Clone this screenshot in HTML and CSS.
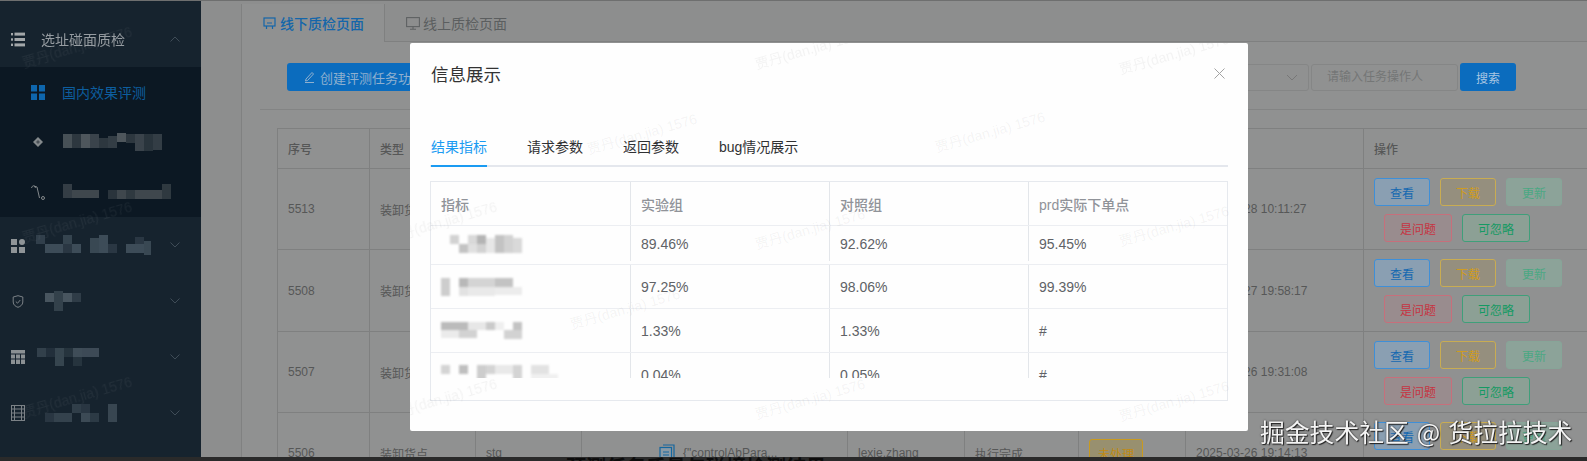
FILE: index.html
```html
<!DOCTYPE html>
<html lang="zh-CN">
<head>
<meta charset="utf-8">
<title>选址碰面质检</title>
<link rel="stylesheet" href="styles.css">
</head>
<body>
<div class="page">
  <div class="app">
    <aside class="sidebar">
      <div class="menu-row">
        <svg class="menu-icon" width="14" height="15" viewBox="0 0 14 15"><g fill="#a3a7a9"><rect x="0" y="1" width="2" height="2.4"/><rect x="0" y="6.3" width="2" height="2.4"/><rect x="0" y="11.6" width="2" height="2.4"/><rect x="3.5" y="0.6" width="10.5" height="3"/><rect x="3.5" y="6" width="10.5" height="3"/><rect x="3.5" y="11.4" width="10.5" height="3"/></g></svg>
        <span class="menu-title">选址碰面质检</span>
        <svg class="chevron" width="10" height="6" viewBox="0 0 10 6"><path d="M0.5 5.5 5 1l4.5 4.5" fill="none" stroke="#3f4c57" stroke-width="1"/></svg>
      </div>
      <div class="submenu">
        <div class="sub-row">
          <svg class="sub-icon" width="14" height="15" viewBox="0 0 14 15"><g fill="#0e66ad"><rect width="6" height="6.5"/><rect x="8" width="6" height="6.5"/><rect y="8.5" width="6" height="6.5"/><rect x="8" y="8.5" width="6" height="6.5"/></g></svg>
          <span class="sub-active">国内效果评测</span>
        </div>
        <div class="sub-row">
          <svg class="sub-icon" width="14" height="14" viewBox="0 0 14 14"><path d="M7 2l5 5-5 5-5-5z" fill="#84898c"/><path d="M7 5l2 2-2 2-2-2z" fill="#4a5157"/></svg>
          <svg class="mosaic" width="100" height="18" viewBox="0 0 100 18"><g fill="#4e565c"><rect y="1" width="9" height="14" opacity=".9"/><rect x="9" y="1" width="9" height="14" opacity=".5"/><rect x="18" y="1" width="9" height="14"/><rect x="27" y="1" width="9" height="14" opacity=".7"/><rect x="36" y="5" width="9" height="10" opacity=".5"/><rect x="45" y="3" width="9" height="12" opacity=".6"/><rect x="54" width="9" height="9" /><rect x="63" y="1" width="9" height="9" opacity=".5"/><rect x="72" y="1" width="9" height="17" opacity=".7"/><rect x="81" y="1" width="9" height="17" opacity=".45"/><rect x="90" y="1" width="9" height="16" opacity=".6"/></g></svg>
        </div>
        <div class="sub-row">
          <svg class="sub-icon" width="14" height="16" viewBox="0 0 14 16"><path d="M0.5 4c1-3 3-3 4 0M3 2l3 1M6 3l2.500 11" fill="none" stroke="#83888b" stroke-width="1"/><circle cx="12" cy="14" r="1.500" fill="none" stroke="#83888b"/></svg>
          <svg class="mosaic" width="108" height="16" viewBox="0 0 108 16"><g fill="#3f474d"><rect width="9" height="14" opacity=".8"/><rect x="9" y="6" width="27" height="8"/><rect x="45" y="6" width="9" height="9" opacity=".6"/><rect x="54" y="6" width="9" height="9"/><rect x="63" y="6" width="9" height="9" opacity=".7"/><rect x="72" y="6" width="27" height="9"/><rect x="99" y="0" width="9" height="15" opacity=".7"/></g></svg>
        </div>
      </div>
      <div class="menu-row">
        <svg class="menu-icon" width="14" height="15" viewBox="0 0 14 15"><g fill="#8f9497"><rect y="1" width="6" height="6"/><circle cx="11" cy="4" r="3"/><rect y="9" width="6" height="6"/><rect x="8" y="9" width="6" height="6"/></g></svg>
        <svg class="mosaic mosaic-a" width="116" height="20" viewBox="0 0 116 20"><g fill="#3d4c58"><rect y="0" width="9" height="9" opacity=".7"/><rect x="9" y="9" width="18" height="9"/><rect x="27" y="9" width="9" height="9" opacity=".5"/><rect x="27" y="0" width="9" height="9" opacity=".8"/><rect x="36" y="9" width="9" height="9" /><rect x="54" y="3" width="9" height="15" opacity=".9"/><rect x="63" y="0" width="9" height="18"/><rect x="72" y="9" width="9" height="9" opacity=".5"/><rect x="90" y="9" width="18" height="9"/><rect x="99" y="2" width="9" height="7" opacity=".5"/><rect x="108" y="6" width="7" height="14" opacity=".9"/></g></svg>
        <svg class="chevron" width="10" height="6" viewBox="0 0 10 6"><path d="M0.5 0.500 5 5l4.500-4.500" fill="none" stroke="#3f4c57" stroke-width="1"/></svg>
      </div>
      <div class="menu-row">
        <svg class="menu-icon" width="14" height="13" viewBox="0 0 14 13"><path d="M7 .7 11.800 2v5c0 3-2.500 4.500-4.800 5.300C4.700 11.500 2.200 10 2.200 7V2z" fill="none" stroke="#7b8186" stroke-width="1"/><path d="M4.800 6.500 6.500 8.200 9.300 5" fill="none" stroke="#7b8186" stroke-width="1"/></svg>
        <svg class="mosaic mosaic-b" width="36" height="20" viewBox="0 0 36 20"><g fill="#48555f"><rect y="2" width="9" height="9"/><rect x="9" y="0" width="9" height="20" opacity=".6"/><rect x="18" y="2" width="9" height="9"/><rect x="27" y="2" width="9" height="9" opacity=".5"/></g></svg>
        <svg class="chevron" width="10" height="6" viewBox="0 0 10 6"><path d="M0.5 0.500 5 5l4.500-4.500" fill="none" stroke="#3f4c57" stroke-width="1"/></svg>
      </div>
      <div class="menu-row">
        <svg class="menu-icon" width="14" height="14" viewBox="0 0 14 14"><g fill="#8b9093"><rect width="14" height="3.500"/><rect y="4.500" width="4" height="4"/><rect x="5" y="4.500" width="4" height="4"/><rect x="10" y="4.500" width="4" height="4"/><rect y="9.500" width="4" height="4.500"/><rect x="5" y="9.500" width="4" height="4.500"/><rect x="10" y="9.500" width="4" height="4.500"/></g></svg>
        <svg class="mosaic mosaic-c" width="62" height="18" viewBox="0 0 62 18"><g fill="#3f4d58"><rect y="0" width="9" height="9" opacity=".7"/><rect x="9" y="0" width="9" height="9" opacity=".3"/><rect x="18" y="0" width="9" height="18" opacity=".8"/><rect x="27" y="0" width="9" height="9" opacity=".4"/><rect x="36" y="0" width="9" height="9"/><rect x="36" y="9" width="9" height="9" opacity=".4"/><rect x="45" y="0" width="17" height="9" opacity=".95"/></g></svg>
        <svg class="chevron" width="10" height="6" viewBox="0 0 10 6"><path d="M0.5 0.500 5 5l4.500-4.500" fill="none" stroke="#3f4c57" stroke-width="1"/></svg>
      </div>
      <div class="menu-row">
        <svg class="menu-icon" width="14" height="16" viewBox="0 0 14 16"><g fill="none" stroke="#7b8186" stroke-width="1"><rect x=".5" y=".5" width="13" height="15"/><path d="M3.500 .5v15M10.500 .5v15M.5 4h13M.5 8h13M.5 12h13"/></g></svg>
        <svg class="mosaic mosaic-d" width="72" height="18" viewBox="0 0 72 18"><g fill="#3c4a55"><rect y="9" width="9" height="9" opacity=".5"/><rect x="9" y="9" width="18" height="9" opacity=".8"/><rect x="27" y="0" width="9" height="9" opacity=".7"/><rect x="36" y="0" width="9" height="9" opacity=".5"/><rect x="36" y="9" width="9" height="9"/><rect x="45" y="9" width="9" height="9" opacity=".6"/><rect x="63" y="0" width="9" height="18" opacity=".9"/></g></svg>
        <svg class="chevron" width="10" height="6" viewBox="0 0 10 6"><path d="M0.5 0.500 5 5l4.500-4.500" fill="none" stroke="#3f4c57" stroke-width="1"/></svg>
      </div>
    </aside>

    <main class="main">
      <div class="card">
        <div class="tabs">
          <div class="tab tab-active">
            <svg width="13" height="13" viewBox="0 0 13 13"><g fill="none" stroke="#1466aa" stroke-width="1.200"><rect x="1" y="1" width="11" height="8"/><path d="M3.500 9v3M9.500 9v3M4 6h5"/></g></svg>
            <span>线下质检页面</span>
          </div>
          <div class="tab">
            <svg width="14" height="13" viewBox="0 0 14 13"><g fill="none" stroke="#5f6263" stroke-width="1.100"><rect x=".6" y=".6" width="12.800" height="9"/><path d="M7 9.600v2.400M4 12.300h6"/></g></svg>
            <span>线上质检页面</span>
          </div>
        </div>
        <div class="toolbar">
          <button class="btn-primary btn-create">
            <svg width="11" height="12" viewBox="0 0 11 12"><path d="M2 8 8 1.500l1.500 1.500L3.500 9.500 1.500 10zM1 11.500h9" fill="none" stroke="#8fb0cf" stroke-width="1"/></svg>
            <span>创建评测任务功能</span>
          </button>
          <div class="filters">
            <div class="select"><svg width="12" height="7" viewBox="0 0 12 7"><path d="M1 1l5 5 5-5" fill="none" stroke="#777" stroke-width="1"/></svg></div>
            <div class="input">请输入任务操作人</div>
            <button class="btn-primary btn-search">搜索</button>
          </div>
        </div>
        <div class="divider"></div>
        <table class="grid">
          <colgroup>
            <col class="c-id"><col class="c-type"><col class="c-env"><col class="c-param"><col class="c-user"><col class="c-state"><col class="c-result"><col class="c-time"><col class="c-op">
          </colgroup>
          <thead>
            <tr><th>序号</th><th>类型</th><th></th><th></th><th></th><th></th><th></th><th></th><th>操作</th></tr>
          </thead>
          <tbody>
            <tr>
              <td>5513</td><td>装卸货点</td><td>stg</td><td></td><td></td><td></td><td></td><td>2025-03-28 10:11:27</td>
              <td class="ops"><div class="op-line"><span class="b b-view">查看</span><span class="b b-down">下载</span><span class="b b-upd">更新</span></div><div class="op-line op-line2"><span class="b b-wide b-bug">是问题</span><span class="b b-wide b-skip">可忽略</span></div></td>
            </tr>
            <tr class="row-tall">
              <td>5508</td><td>装卸货点</td><td>stg</td><td></td><td></td><td></td><td></td><td>2025-03-27 19:58:17</td>
              <td class="ops"><div class="op-line"><span class="b b-view">查看</span><span class="b b-down">下载</span><span class="b b-upd">更新</span></div><div class="op-line op-line2"><span class="b b-wide b-bug">是问题</span><span class="b b-wide b-skip">可忽略</span></div></td>
            </tr>
            <tr>
              <td>5507</td><td>装卸货点</td><td>stg</td><td></td><td></td><td></td><td></td><td>2025-03-26 19:31:08</td>
              <td class="ops"><div class="op-line"><span class="b b-view">查看</span><span class="b b-down">下载</span><span class="b b-upd">更新</span></div><div class="op-line op-line2"><span class="b b-wide b-bug">是问题</span><span class="b b-wide b-skip">可忽略</span></div></td>
            </tr>
            <tr>
              <td>5506</td><td>装卸货点</td><td>stg</td>
              <td class="param"><span class="param-in"><svg width="16" height="18" viewBox="0 0 16 18"><g fill="none" stroke="#14679f" stroke-width="1.200"><path d="M4 1h11v13"/><rect x="1" y="3.500" width="11.500" height="14" fill="#8a9aa6"/><path d="M4 8h6M4 11h6M4 14h6"/></g></svg><span>{"controlAbPara...</span></span></td>
              <td>lexie.zhang</td><td>执行完成</td><td><span class="badge">未处理</span></td><td>2025-03-26 19:14:13</td>
              <td class="ops"><div class="op-line"><span class="b b-view">查看</span><span class="b b-down">下载</span><span class="b b-upd">更新</span></div></td>
            </tr>
          </tbody>
        </table>
      </div>
    </main>
  </div>
  <div class="article-strip">1.1.1 预测任务质量与碰撞检测结果</div>

  <span class="wm wm-dark wm-s1">贾丹(dan.jia) 1576</span>
  <span class="wm wm-dark wm-s2">贾丹(dan.jia) 1576</span>
  <span class="wm wm-dark wm-s3">贾丹(dan.jia) 1576</span>

  <section class="modal">
    <header class="modal-head">
      <h2 class="modal-title">信息展示</h2>
      <svg class="modal-close" width="11" height="11" viewBox="0 0 11 11"><path d="M.5.500l10 10M10.500.500l-10 10" stroke="#a3a3a3" stroke-width="1" fill="none"/></svg>
    </header>
    <nav class="mtabs">
      <span class="mtab mtab-active">结果指标</span>
      <span class="mtab">请求参数</span>
      <span class="mtab">返回参数</span>
      <span class="mtab">bug情况展示</span>
    </nav>
    <div class="mtable">
      <div class="mrow mrow-head"><div class="mc">指标</div><div class="mc">实验组</div><div class="mc">对照组</div><div class="mc">prd实际下单点</div></div>
      <div class="mbody">
        <div class="mrow mrow-first">
          <div class="mc"><svg class="pix pix1" width="72" height="18" viewBox="0 0 72 18"><g fill="#b4b4b4"><rect width="9" height="9" opacity=".6"/><rect x="9" y="9" width="9" height="9" opacity=".8"/><rect x="18" width="9" height="9" opacity=".5"/><rect x="18" y="9" width="9" height="9" opacity=".4"/><rect x="27" width="9" height="9"/><rect x="27" y="9" width="9" height="9" opacity=".6"/><rect x="36" y="3" width="9" height="15" opacity=".3"/><rect x="45" width="9" height="18" opacity=".8"/><rect x="54" width="9" height="18" opacity=".6"/><rect x="63" y="3" width="9" height="15" opacity=".5"/></g></svg></div>
          <div class="mc">89.46%</div><div class="mc">92.62%</div><div class="mc">95.45%</div>
        </div>
        <div class="mrow">
          <div class="mc"><svg class="pix" width="90" height="18" viewBox="0 0 90 18"><g fill="#b8b8b8"><rect width="9" height="18" opacity=".7"/><rect x="18" width="9" height="9"/><rect x="18" y="9" width="9" height="9" opacity=".4"/><rect x="27" width="27" height="9" opacity=".6"/><rect x="27" y="9" width="27" height="9" opacity=".3"/><rect x="54" width="18" height="9" opacity=".85"/><rect x="54" y="9" width="27" height="8" opacity=".25"/></g></svg></div>
          <div class="mc">97.25%</div><div class="mc">98.06%</div><div class="mc">99.39%</div>
        </div>
        <div class="mrow">
          <div class="mc"><svg class="pix" width="81" height="17" viewBox="0 0 81 17"><g fill="#b4b4b4"><rect width="27" height="8" opacity=".9"/><rect y="8" width="18" height="8" opacity=".25"/><rect x="18" y="8" width="18" height="8" opacity=".6"/><rect x="27" width="18" height="8" opacity=".3"/><rect x="45" width="9" height="8" opacity=".7"/><rect x="54" width="9" height="8" opacity=".2"/><rect x="63" y="8" width="18" height="9" opacity=".6"/><rect x="72" width="9" height="8" opacity=".8"/></g></svg></div>
          <div class="mc">1.33%</div><div class="mc">1.33%</div><div class="mc">#</div>
        </div>
        <div class="mrow">
          <div class="mc"><svg class="pix" width="117" height="19" viewBox="0 0 117 19"><g fill="#b8b8b8"><rect width="9" height="9" opacity=".6"/><rect x="18" width="9" height="9" opacity=".9"/><rect x="36" width="9" height="19" opacity=".7"/><rect x="45" width="9" height="9" opacity=".6"/><rect x="54" width="18" height="9" opacity=".3"/><rect x="72" width="9" height="19" opacity=".6"/><rect x="90" width="18" height="9" opacity=".4"/><rect x="90" y="9" width="27" height="9" opacity=".2"/></g></svg></div>
          <div class="mc">0.04%</div><div class="mc">0.05%</div><div class="mc">#</div>
        </div>
      </div>
    </div>
    <span class="wm wm-light wm-m1">贾丹(dan.jia) 1576</span>
    <span class="wm wm-light wm-m2">贾丹(dan.jia) 1576</span>
    <span class="wm wm-light wm-m3">贾丹(dan.jia) 1576</span>
    <span class="wm wm-light wm-m4">贾丹(dan.jia) 1576</span>
    <span class="wm wm-light wm-m5">贾丹(dan.jia) 1576</span>
    <span class="wm wm-light wm-m6">贾丹(dan.jia) 1576</span>
    <span class="wm wm-light wm-m7">贾丹(dan.jia) 1576</span>
    <span class="wm wm-light wm-m8">贾丹(dan.jia) 1576</span>
    <span class="wm wm-light wm-m9">贾丹(dan.jia) 1576</span>
    <span class="wm wm-light wm-m10">贾丹(dan.jia) 1576</span>
    <span class="wm wm-light wm-m11">贾丹(dan.jia) 1576</span>
  </section>

  <div class="credit">掘金技术社区 @ 货拉拉技术</div>
</div>
</body>
</html>
```

FILE: styles.css
```css
* { box-sizing: border-box; }
html, body { margin: 0; padding: 0; }
body {
  width: 1587px;
  height: 461px;
  overflow: hidden;
  font-family: "Liberation Sans", "Noto Sans CJK SC", sans-serif;
  font-size: 12px;
  color: #565757;
  background: #8d8e8e;
}
.page {
  position: relative;
  width: 1587px;
  height: 461px;
  overflow: hidden;
  display: flex;
  flex-direction: column;
  border-top: 1px solid #6e6f6f;
}
.app { display: flex; height: 456px; flex: none; filter: blur(.4px); }

/* Sidebar */
.sidebar {
  width: 201px;
  flex: none;
  padding-top: 10px;
  background: #16232e;
  color: #979da2;
}
.menu-row {
  height: 56px;
  display: flex;
  align-items: center;
  padding-left: 11px;
  position: relative;
}
.menu-icon { flex: none; }
.menu-title { margin-left: 16px; font-size: 14px; color: #969ca1; }
.chevron { position: absolute; left: 170px; top: 25px; }
.submenu { background: #0c1823; padding: 0; }
.sub-row { height: 50px; display: flex; align-items: center; padding-left: 31px; }
.sub-icon { flex: none; }
.sub-active { margin-left: 17px; font-size: 14px; color: #0d5e9f; }
.mosaic { margin-left: 18px; flex: none; filter: blur(.7px); }
.mosaic-a { margin-left: 11px; }
.mosaic-b { margin-left: 20px; }
.mosaic-c { margin-left: 12px; }
.mosaic-d { margin-left: 20px; }

/* Main */
.main { flex: 1; min-width: 0; padding: 3px 0 0 40px; overflow: hidden; }
.card {
  height: 100%;
  width: 1346px;
  border-left: 1px solid #808181;
  background: #909191;
}
.tabs {
  display: flex;
  height: 38px;
  background: #8d8e8e;
  border-bottom: 1px solid #7f8080;
}
.tab {
  display: flex;
  align-items: center;
  gap: 4px;
  height: 38px;
  padding-left: 21px;
  width: 143px;
  font-size: 14px;
  color: #5b5e5f;
}
.tab-active {
  color: #1466aa;
  font-weight: 500;
  background: #909191;
  height: 38px;
  border-right: 1px solid #7f8080;
  margin-bottom: -1px;
}
.tab + .tab svg { flex: none; }
.tab + .tab { gap: 3px; width: 180px; }
.toolbar {
  display: flex;
  justify-content: space-between;
  padding: 21px 71px 0 45px;
}
.btn-primary {
  border: 0;
  border-radius: 3px;
  background: #0b6cbe;
  color: #8fb0cf;
  font-family: inherit;
  height: 28px;
  padding: 0;
  display: flex;
  align-items: center;
  justify-content: center;
}
.btn-create { width: 170px; gap: 5px; font-size: 13px; justify-content: flex-start; padding-left: 17px; }
.filters { display: flex; gap: 2px; align-items: stretch; }
.select {
  width: 120px;
  height: 27px;
  margin-top: 1px;
  border: 1px solid #858686;
  border-radius: 3px;
  display: flex;
  align-items: center;
  justify-content: flex-end;
  padding-right: 10px;
}
.input {
  width: 147px;
  height: 27px;
  margin-top: 1px;
  border: 1px solid #858686;
  border-radius: 3px;
  padding-left: 15px;
  line-height: 25px;
  color: #747676;
}
.btn-search { width: 56px; font-size: 12px; color: #a9c6e2; }
.divider { height: 1px; margin: 18px 0 0 18px; background: #838484; }

/* Data table */
.grid {
  border-collapse: collapse;
  table-layout: fixed;
  width: 1310px;
  margin: 18px 0 0 35px;
}
.c-id { width: 92px; }
.c-type { width: 106px; }
.c-env { width: 106px; }
.c-param { width: 266px; }
.c-user { width: 117px; }
.c-state { width: 114px; }
.c-result { width: 107px; }
.c-time { width: 178px; }
.c-op { width: 224px; }
.grid th, .grid td {
  border: 1px solid #7f8080;
  padding: 0 0 0 10px;
  text-align: left;
  font-weight: 400;
  vertical-align: middle;
  white-space: nowrap;
  overflow: hidden;
}
.grid th { height: 40px; font-weight: 500; }
.grid tbody tr { height: 81px; }
.grid tbody tr.row-tall { height: 82px; }
.grid td.ops { padding: 0; vertical-align: top; }
.op-line { display: flex; gap: 10px; padding: 9px 0 0 10px; }
.op-line2 { padding: 8px 0 0 20px; }
.b {
  width: 56px;
  height: 28px;
  border: 1px solid;
  border-radius: 3px;
  display: flex;
  align-items: center;
  justify-content: center;
  font-size: 12px;
}
.b-wide { width: 68px; }
.b-view { background: #8a9fb2; border-color: #3e8fd8; color: #1568b0; }
.b-down { background: #958f7e; border-color: #c9ac52; color: #cf9c22; }
.b-upd { background: #8ca399; border-color: #87a598; color: #4aa883; }
.b-bug { background: #998c8e; border-color: #c76f7b; color: #c63442; }
.b-skip { background: #8ca095; border-color: #3f9f7a; color: #149a63; }
.param-in { display: flex; align-items: center; gap: 8px; padding-left: 67px; }
.badge {
  display: inline-flex;
  align-items: center;
  justify-content: center;
  width: 54px;
  height: 28px;
  border: 1px solid #c99a1f;
  border-radius: 3px;
  background: #98906f;
  color: #c08a13;
}

/* Screenshot edge below the app */
.article-strip {
  flex: 1;
  background: #2a2a2a;
  color: #0c0c0c;
  font-size: 20px;
  line-height: 22px;
  font-weight: 700;
  padding-left: 516px;
  overflow: hidden;
  white-space: nowrap;
}

/* Modal */
.modal {
  position: absolute;
  left: 410px;
  top: 42px;
  width: 838px;
  height: 388px;
  background: #fefefe;
  border-radius: 2px;
  padding: 0 20px;
  overflow: hidden;
  filter: blur(.3px);
}
.modal-head {
  display: flex;
  justify-content: space-between;
  padding: 20px 0 0 1px;
  height: 84px;
}
.modal-title { margin: 0; font-size: 17.500px; line-height: 24px; font-weight: 400; color: #333; }
.modal-close { margin: 5px 3px 0 0; }
.mtabs {
  display: flex;
  height: 40px;
  border-bottom: 2px solid #e4e7ed;
  gap: 40px;
  padding-left: 1px;
}
.mtab { height: 40px; line-height: 40px; font-size: 14px; color: #303133; font-weight: 400; }
.mtab-active { color: #1a9bf2; border-bottom: 2px solid #1a9bf2; }
.mtable {
  margin-top: 14px;
  width: 798px;
  height: 220px;
  border: 1px solid #e6e9ee;
}
.mbody { height: 152px; overflow: hidden; }
.mrow { display: grid; grid-template-columns: 200px 199px 199px 1fr; height: 44px; border-bottom: 1px solid #eceef2; font-size: 14px; color: #606266; }
.mrow-first { height: 39px; padding-bottom: 3px; }
.mrow-head { height: 44px; color: #909399; font-weight: 500; }
.mc { border-right: 1px solid #e3e6ea; padding-left: 10px; display: flex; align-items: center; }
.mc:last-child { border-right: 0; }
.pix { filter: blur(.8px); flex: none; }
.pix1 { margin-left: 9px; }

/* Watermarks */
.wm {
  position: absolute;
  font-size: 14px;
  white-space: nowrap;
  transform: rotate(-16deg);
  pointer-events: none;
}
.wm-dark { color: rgba(255, 255, 255, .05); }
.wm-light { color: rgba(120, 120, 120, .08); }
.wm-s1 { left: 20px; top: 35px; }
.wm-s2 { left: 20px; top: 210px; }
.wm-s3 { left: 20px; top: 385px; }
.wm-m1 { left: 343px; top: -5px; }
.wm-m2 { left: 707px; top: 0; }
.wm-m3 { left: 175px; top: 80px; }
.wm-m4 { left: 523px; top: 78px; }
.wm-m5 { left: 707px; top: 172px; }
.wm-m6 { left: 158px; top: 255px; }
.wm-m7 { left: 343px; top: 345px; }
.wm-m8 { left: 343px; top: 175px; }
.wm-m9 { left: -25px; top: 168px; }
.wm-m10 { left: 707px; top: 347px; }
.wm-m11 { left: -25px; top: 345px; }

/* Overlaid credit */
.credit {
  position: absolute;
  left: 1260px;
  top: 412px;
  font-size: 24.800px;
  word-spacing: 2.500px;
  line-height: 36px;
  white-space: nowrap;
  color: #f4f4f4;
  font-family: "Noto Sans CJK SC", "Liberation Sans", sans-serif;
  text-shadow: 1px 1px 1px #222, 0 0 2px #333;
}
```
